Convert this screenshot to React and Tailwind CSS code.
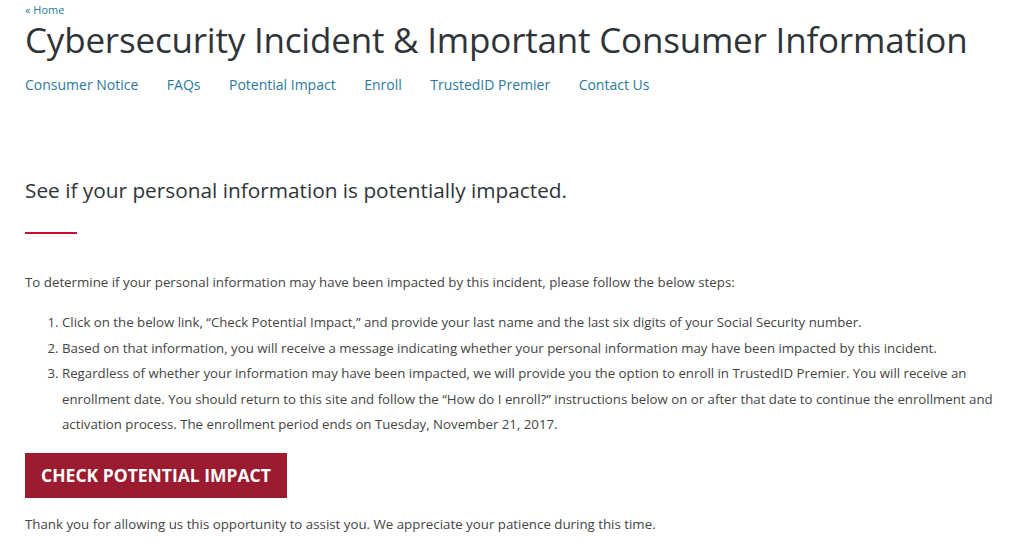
export default function App() {
  const nav = ["Consumer Notice", "FAQs", "Potential Impact", "Enroll", "TrustedID Premier", "Contact Us"];
  return (
    <div className="min-h-[554px] bg-white text-[#3a3f44]" style={{ fontFamily: '"Open Sans", sans-serif' }}>
      <div className="px-[25px] pt-[3px]">
        <a className="text-[11px] leading-[14px] text-[#2a7a9b] block">« Home</a>
        <h1 className="text-[35px] leading-[42px] text-[#2f3439] tracking-[-0.2px] mt-[2px]">
          Cybersecurity Incident &amp; Important Consumer Information
        </h1>
        <nav className="flex gap-[28.5px] mt-[14px] text-[14px] leading-[20px] text-[#2a7a9b]">
          {nav.map((n) => (
            <a key={n}>{n}</a>
          ))}
        </nav>
        <h2 className="mt-[81px] text-[20.8px] leading-[28px] text-[#2f3439]">
          See if your personal information is potentially impacted.
        </h2>
        <div className="mt-[28px] w-[52px] h-[2px] bg-[#c8102e]" />
        <p className="mt-[38px] text-[13.3px] leading-[20px] text-[#444]">
          To determine if your personal information may have been impacted by this incident, please follow the below steps:
        </p>
        <ol className="mt-[18px] pl-[37px] list-decimal text-[13.25px] leading-[25.5px] text-[#444] -mr-[2px]">
          <li>Click on the below link, “Check Potential Impact,” and provide your last name and the last six digits of your Social Security number.</li>
          <li>Based on that information, you will receive a message indicating whether your personal information may have been impacted by this incident.</li>
          <li>Regardless of whether your information may have been impacted, we will provide you the option to enroll in TrustedID Premier. You will receive an enrollment date. You should return to this site and follow the “How do I enroll?” instructions below on or after that date to continue the enrollment and activation process. The enrollment period ends on Tuesday, November 21, 2017.</li>
        </ol>
        <button className="mt-[15px] w-[262px] h-[45px] bg-[#9b1c31] text-white font-bold text-[17.5px] uppercase">
          Check Potential Impact
        </button>
        <p className="mt-[16px] text-[13.3px] leading-[20px] text-[#444]">
          Thank you for allowing us this opportunity to assist you. We appreciate your patience during this time.
        </p>
      </div>
    </div>
  );
}
